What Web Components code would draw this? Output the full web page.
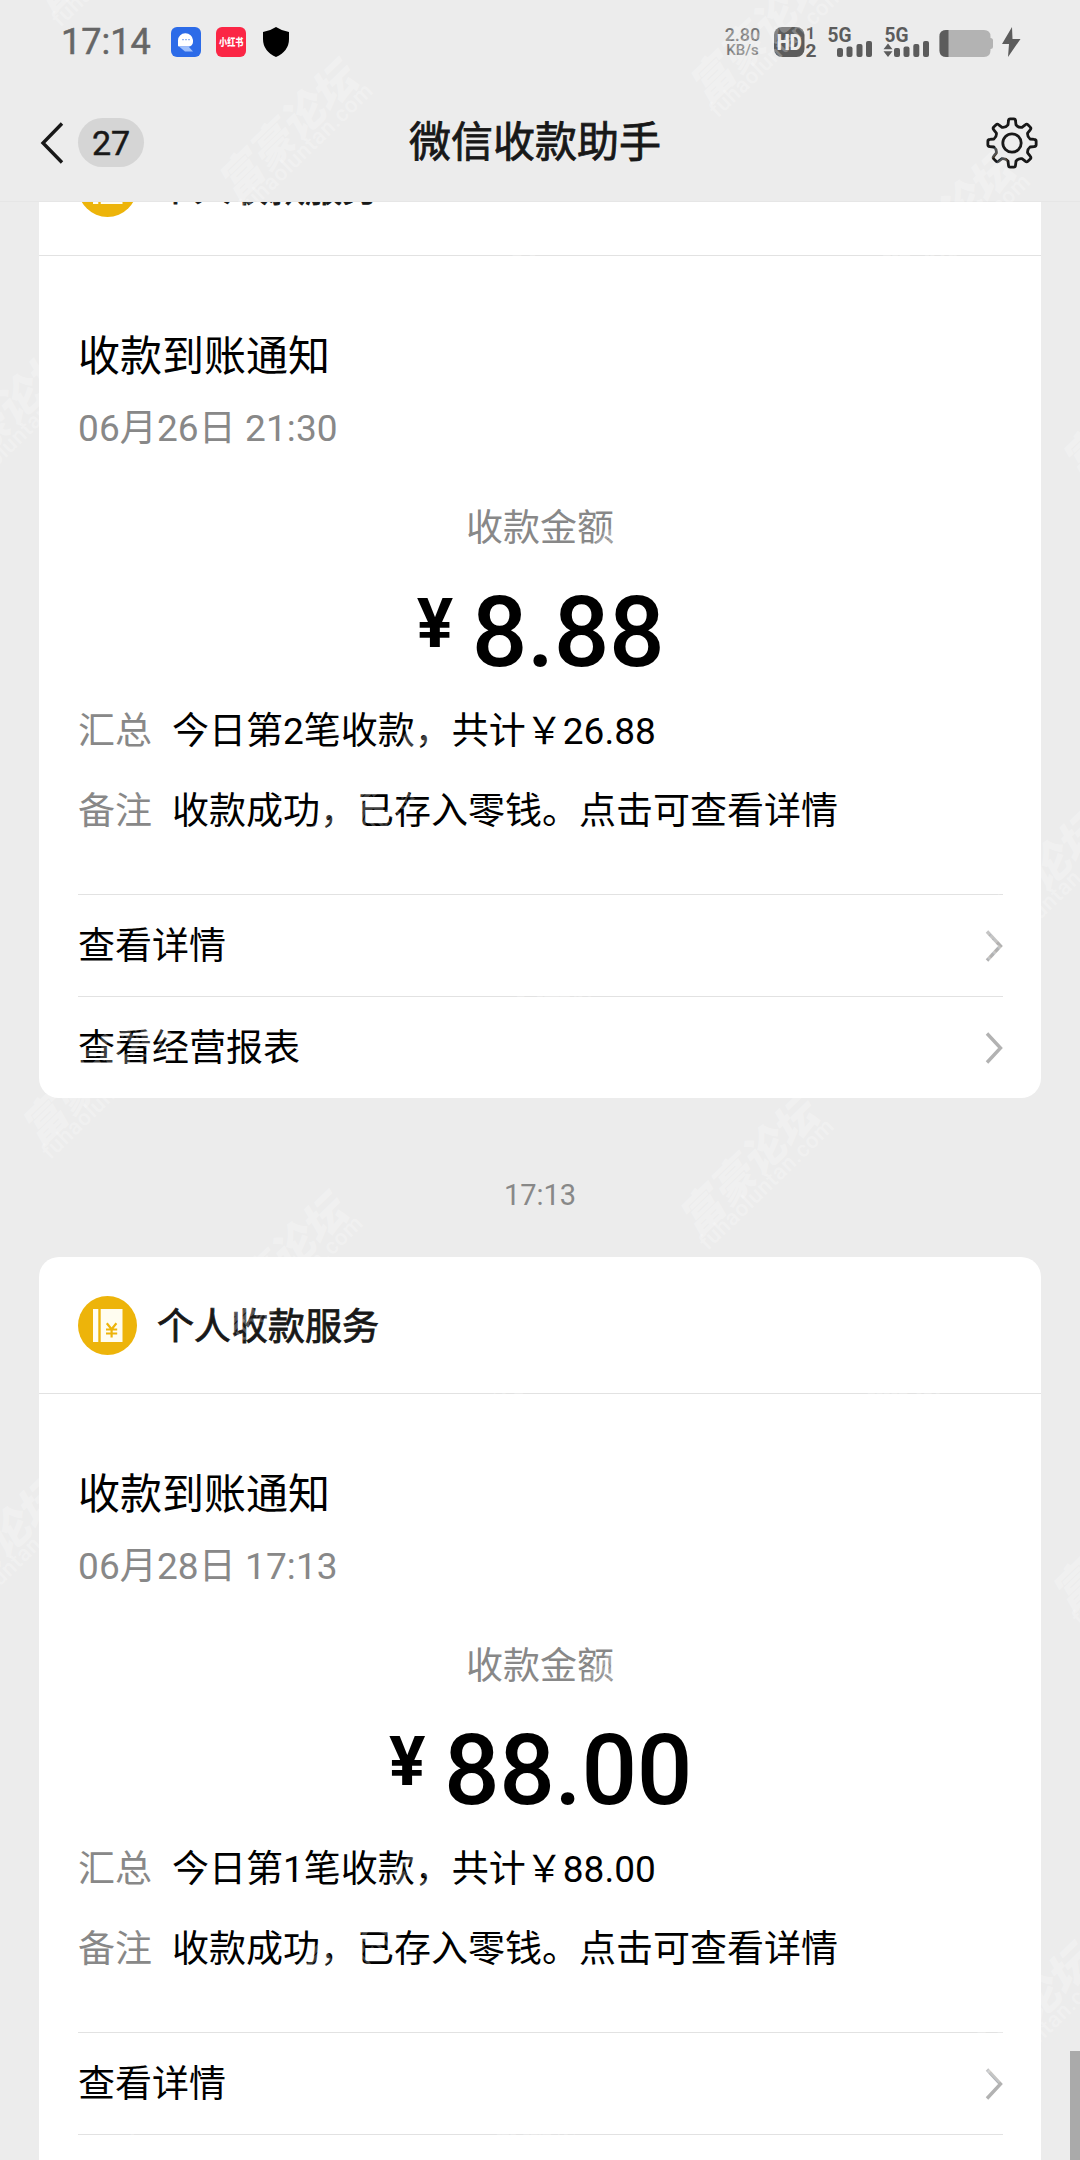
<!DOCTYPE html>
<html lang="zh-CN">
<head>
<meta charset="utf-8">
<title>微信收款助手</title>
<style>
html,body{margin:0;padding:0}
body{width:1080px;height:2160px;overflow:hidden;background:#ececec;font-family:Roboto,"Noto Sans CJK SC",sans-serif}
</style>
</head>
<body>
<pay-app></pay-app>
<script>
const define = (name, html, setup) => customElements.define(name, class extends HTMLElement {
  constructor() {
    super();
    this.attachShadow({ mode: 'open' });
  }
  connectedCallback() {
    this.shadowRoot.innerHTML = html;
    if (setup) setup(this, this.shadowRoot);
  }
});

define('status-bar', `
<style>
:host{display:flex;height:84px;box-sizing:border-box;padding:27px 59px 0 61px;color:#666;justify-content:space-between;align-items:flex-start}
.l,.r{display:flex;align-items:flex-start;height:30px}
.time{font-size:36px;line-height:30px;letter-spacing:0;width:110px;font-weight:400;-webkit-text-stroke:.5px #666}
svg{display:block;flex:none;overflow:visible}
.b{margin-right:15px}.c{margin-right:17px}
.speed{width:36px;margin-right:12px;text-align:center;font-weight:500;color:#777}
.speed div:first-child{font-size:18px;line-height:16px;margin-left:-1px}
.speed div:last-child{font-size:15px;line-height:14px;margin-left:-1px}
</style>
<div class="l">
  <div class="time">17:14</div>
  <svg class="b" width="30" height="30" viewBox="0 0 30 30"><rect width="30" height="30" rx="6" fill="#2c6be8"/><path d="M7 18v-4.500a7.500 7 0 0 1 15-.500v2a4.500 4.500 0 0 1-4.500 4.500H8q-1 0-1-1z" fill="#fff"/><path d="M8 19.500h9.500l4.500 5h-8z" fill="#9fc0fb"/><path d="M11 12.700h2M14 12.700h2M17 12.700h2" stroke="#7ba5f2" stroke-width="1"/></svg>
  <svg class="c" width="30" height="30" viewBox="0 0 30 30"><rect width="30" height="30" rx="6" fill="#fb2645"/><text x="3" y="19" font-size="10" font-weight="900" fill="#fff" font-family="Noto Sans CJK SC" textLength="24.500" lengthAdjust="spacingAndGlyphs">小红书</text></svg>
  <svg width="26" height="30" viewBox="0 0 26 30"><path d="M13 0Q19 4 26 5V12Q26 24 13 30Q0 24 0 12V5Q7 4 13 0z" fill="#000"/></svg>
</div>
<div class="r">
  <div class="speed"><div>2.80</div><div>KB/s</div></div>
  <svg width="248" height="30" viewBox="773 27 248 30" fill="#5c5c5c" font-family="Roboto" font-weight="700">
    <rect x="774" y="27" width="30.500" height="30" rx="8"/>
    <text x="776.700" y="50" font-size="22" font-weight="900" fill="#ececec" textLength="25" lengthAdjust="spacingAndGlyphs">HD</text>
    <text x="806" y="39" font-size="17" textLength="9" lengthAdjust="spacingAndGlyphs">1</text>
    <text x="805.500" y="56.700" font-size="18" textLength="11" lengthAdjust="spacingAndGlyphs">2</text>
    <text x="827.500" y="41.500" font-size="19.500" textLength="24" lengthAdjust="spacingAndGlyphs">5G</text>
    <rect x="837" y="48" width="6" height="9" rx="2"/><rect x="846.500" y="46.500" width="6" height="10.500" rx="2"/><rect x="856.500" y="44" width="6" height="13" rx="2"/><rect x="866" y="41" width="6" height="16" rx="2"/>
    <text x="884.500" y="41.500" font-size="19.500" textLength="24" lengthAdjust="spacingAndGlyphs">5G</text>
    <path d="M888 43.500l4.500 5.700h-9zM888 57l4.500-5.700h-9z"/>
    <rect x="894" y="48" width="6" height="9" rx="2"/><rect x="903.500" y="46.500" width="6" height="10.500" rx="2"/><rect x="913.300" y="44" width="6" height="13" rx="2"/><rect x="923" y="41" width="6" height="16" rx="2"/>
    <path d="M946 30h38q6.500 0 6.500 6.500v1.500q2.500 0 2.500 2.500v6q0 2.500-2.500 2.500v1.500q0 6.500-6.500 6.500h-38q-6.500 0-6.500-6.500v-14q0-6.500 6.500-6.500z" fill="#b3b3b3"/>
    <path d="M948.500 30H946q-6.500 0-6.500 6.500v14q0 6.500 6.500 6.500h2.500z"/>
    <path d="M1012 27l-10 17h7l-1 13 12.500-18h-8z"/>
  </svg>
</div>`);

define('nav-bar', `
<style>
:host{display:grid;grid-template-columns:1fr auto 1fr;align-items:center;height:118px;padding:0 42px 0 40px;box-sizing:border-box;border-bottom:1px solid #e6e6e6;color:#181818}
.back{display:flex;align-items:center;gap:14px}
.badge{width:66px;height:49px;border-radius:25px;background:#d5d5d5;font-size:34px;line-height:50px;text-align:center;-webkit-text-stroke:.5px #181818}
.t{font-size:42px;line-height:60px;margin-left:-8px;-webkit-text-stroke:.8px #181818;padding-top:1px}
svg{display:block}.g{justify-self:end}
</style>
<div class="back">
<svg width="24" height="44" viewBox="0 0 24 44"><path d="M22 2.500L3 22l19 19.500" fill="none" stroke="#181818" stroke-width="3.400"/></svg>
<div class="badge"><slot name="count"></slot></div></div>
<div class="t"><slot></slot></div>
<svg class="g" width="52" height="52" viewBox="-26 -26 52 52" fill="none" stroke="#181818" stroke-width="2.800" stroke-linejoin="round"><circle r="9.200"/><path id="gear"/></svg>`,
(host, root) => {
  const pt = (r, deg) => {
    const a = (deg - 90) * Math.PI / 180;
    return (r * Math.cos(a)).toFixed(2) + ' ' + (r * Math.sin(a)).toFixed(2);
  };
  let d = '';
  for (let k = 0; k < 8; k++) {
    const t = k * 45;
    d += (k ? 'L' : 'M') + pt(18.5, t - 12.5) + 'L' + pt(22.5, t - 9) + 'Q' + pt(24.4, t - 8) + ' ' + pt(24.2, t - 4) +
      'L' + pt(24.2, t + 4) + 'Q' + pt(24.4, t + 8) + ' ' + pt(22.5, t + 9) + 'L' + pt(18.5, t + 12.5) +
      'Q' + pt(16.4, t + 22.5) + ' ' + pt(18.5, t + 32.5);
  }
  root.getElementById('gear').setAttribute('d', d + 'Z');
});

define('info-row', `
<style>
:host{display:flex;gap:20px;font-size:37px;line-height:44px;height:44px;white-space:nowrap;color:#000}
.k{color:#888;width:74px}
.k,.v{padding-top:2px}
</style><div class="k"><slot name="key"></slot></div><div class="v"><slot></slot></div>`);

define('link-row', `
<style>
:host{display:flex;align-items:center;justify-content:space-between;height:102px;box-sizing:border-box;border-top:1px solid #e2e2e2;font-size:37px;line-height:44px;color:#000}
.t{padding-top:3px}
svg{display:block}
</style><div class="t"><slot></slot></div>
<svg width="18" height="32" viewBox="0 0 18 32"><path d="M2 1.500L15.500 16L2 30.500" fill="none" stroke="#b2b2b2" stroke-width="3.400"/></svg>`);

define('pay-card', `
<style>
:host{display:block;width:1002px;height:979px;border-radius:20px;background:#fff;flex:none}
header{display:flex;align-items:center;gap:20px;height:136px;padding:0 39px;border-bottom:1px solid #e2e2e2}
h2{margin:0;font-size:37px;font-weight:400;line-height:44px;padding-top:6px;color:#181818;-webkit-text-stroke:.8px #181818}
.body{display:flex;flex-direction:column;padding:76px 38px 0 39px}
.title{font-size:42px;line-height:50px;color:#000}
.date{font-size:37px;line-height:44px;color:#888;margin-top:25px;letter-spacing:.1px}
.label{font-size:37px;line-height:44px;color:#888;margin-top:56px;margin-right:1px;text-align:center}
.amt{display:flex;justify-content:center;margin-top:33px;height:98px;color:#000;font-weight:500}
.yen{font-size:68px;line-height:90px;font-weight:700;width:38px;margin-right:17px;margin-top:-5px}
.num{font-size:98px;line-height:98px;letter-spacing:-.4px}
.s{margin-top:26px}.n{margin-top:36px;margin-bottom:62px}
</style>
<header><svg width="59" height="59" viewBox="0 0 59 59"><circle cx="29.500" cy="29.500" r="29.500" fill="#edb40a"/><path d="M15 13h5.300v33H15zM22.700 13h21.800v33H22.700z" fill="#fffdf0"/><path d="M28.800 27.300l4.800 6 4.800-6M33.600 33v8.500M28 33.500h11.200M28 37.500h11.200" fill="none" stroke="#edb40a" stroke-width="2.200"/></svg>
<h2>个人收款服务</h2></header>
<div class="body">
<div class="title">收款到账通知</div>
<div class="date"><slot name="date"></slot></div>
<div class="label">收款金额</div>
<div class="amt"><span class="yen">¥</span><span class="num"><slot name="amount"></slot></span></div>
<info-row class="s"><span slot="key">汇总</span><slot name="sum"></slot></info-row>
<info-row class="n"><span slot="key">备注</span>收款成功，已存入零钱。点击可查看详情</info-row>
<link-row>查看详情</link-row>
<link-row>查看经营报表</link-row>
</div>`);

define('water-mark', `
<style>:host{display:block;position:absolute;inset:0;pointer-events:none}svg{display:block}</style>
<svg width="1080" height="2160" fill="#fff" fill-opacity=".27"></svg>`,
(host, root) => {
  let out = '';
  for (let j = -4; j <= 3; j++) for (let i = -3; i < 20; i++) {
    const x = 30 + 186.4 * i + 471 * j, y = -18 + 187.7 * i - 97 * j;
    if (x < -150 || x > 1075 || y < -40 || y > 2270) continue;
    out += `<g transform="translate(${x} ${y}) rotate(-44)"><text x="-9" y="37" font-size="43" font-weight="900" font-style="italic" font-family="Noto Sans CJK SC">富豪论坛</text><text x="-10" y="54" font-size="22" font-weight="500" font-family="Roboto" textLength="177">fuhaoluntan.com</text></g>`;
  }
  root.querySelector('svg').innerHTML = out;
});

define('pay-app', `
<style>
:host{display:flex;flex-direction:column;position:relative;width:1080px;height:2160px;overflow:hidden;background:#ececec}
.feed{flex:1;min-height:0;overflow:hidden;display:flex;flex-direction:column;align-items:center}
.first{margin-top:-83px}
.time{height:159px;flex:none;display:flex;align-items:center;font-size:29px;color:#888;box-sizing:border-box;padding-top:34px}
.thumb{position:absolute;right:0;bottom:0;width:10px;height:109px;background:#aaa}
</style>
<status-bar></status-bar>
<nav-bar><span slot="count">27</span>微信收款助手</nav-bar>
<div class="feed">
<pay-card class="first"><span slot="date">06月26日 21:30</span><span slot="amount">8.88</span><span slot="sum">今日第2笔收款，共计￥26.88</span></pay-card>
<div class="time">17:13</div>
<pay-card><span slot="date">06月28日 17:13</span><span slot="amount">88.00</span><span slot="sum">今日第1笔收款，共计￥88.00</span></pay-card>
</div>
<div class="thumb"></div>
<water-mark></water-mark>`);
</script>
</body>
</html>
